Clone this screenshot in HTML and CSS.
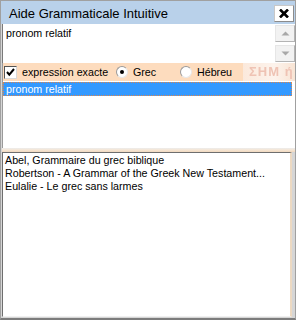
FILE: index.html
```html
<!DOCTYPE html>
<html lang="fr">
<head>
<meta charset="utf-8">
<title>Aide Grammaticale Intuitive</title>
<link rel="stylesheet" href="styles.css">
</head>
<body>
<div class="window">
  <div class="titlebar">
    <span class="title">Aide Grammaticale Intuitive</span>
    <div class="close">
      <svg width="10" height="9" viewBox="0 0 10 9"><path d="M1 0.5 L9 8.5 M9 0.5 L1 8.5" stroke="#000" stroke-width="2.6" fill="none"/></svg>
    </div>
  </div>
  <div class="main">
    <div class="search">
      <div class="search-text">pronom relatif</div>
      <div class="vscroll">
        <div class="sbtn"><svg width="9" height="5" viewBox="0 0 9 5"><path d="M0.5 4.5 L4.5 0.5 L8.5 4.5 Z" fill="#a8a8a8"/></svg></div>
        <div class="sbtn"><svg width="9" height="5" viewBox="0 0 9 5"><path d="M0.5 0.5 L4.5 4.5 L8.5 0.5 Z" fill="#a8a8a8"/></svg></div>
      </div>
    </div>
    <div class="options">
      <div class="opts">
        <label class="opt"><span class="check"><svg width="11" height="11" viewBox="0 0 11 11"><path d="M2 5 L4.3 7.6 L9 2" stroke="#000" stroke-width="2" fill="none"/></svg></span>expression exacte</label>
        <label class="opt"><span class="radio on"></span>Grec</label>
        <label class="opt"><span class="radio"></span>Hébreu</label>
      </div>
      <div class="deco">ΣΗΜ ή</div>
    </div>
    <div class="list1">
      <div class="item sel">pronom relatif</div>
    </div>
    <div class="splitter"></div>
    <div class="list2">
      <div class="row">Abel, Grammaire du grec biblique</div>
      <div class="row">Robertson - A Grammar of the Greek New Testament...</div>
      <div class="row">Eulalie - Le grec sans larmes</div>
    </div>
  </div>
</div>
</body>
</html>
```

FILE: styles.css
```css
html, body {
  margin: 0;
  padding: 0;
  background: #ffffff;
}
body {
  font-family: "Liberation Sans", Arial, sans-serif;
  font-size: 10.7px;
  color: #000;
}
.window {
  width: 296px;
  height: 320px;
  box-sizing: border-box;
  border: 1px solid #a0a0a0;
  border-bottom: 2px solid #7c7c7c;
  display: flex;
  flex-direction: column;
  background: #d6d6d6;
}
.titlebar {
  height: 23px;
  flex: none;
  background: #b9d1ea;
  display: flex;
  align-items: center;
  justify-content: space-between;
  padding: 0 1px 0 8px;
}
.title {
  font-size: 13px;
  color: #000;
  padding-top: 2px;
}
.close {
  width: 18px;
  height: 15px;
  margin-top: 1px;
  background: #fff;
  border: 1px solid #8c8c8c;
  border-top-color: #c8c8c8;
  border-left-color: #c8c8c8;
  display: flex;
  align-items: center;
  justify-content: center;
}
.main {
  flex: 1;
  display: flex;
  flex-direction: column;
  padding: 0 0 1px 1px;
  min-height: 0;
}
.search {
  height: 39px;
  flex: none;
  display: flex;
  background: #fff;
  border-left: 1px solid #7a7a7a;
}
.search-text {
  flex: 1;
  padding: 3px 0 0 3px;
  line-height: 13px;
}
.vscroll {
  width: 20px;
  display: flex;
  flex-direction: column;
  justify-content: space-between;
  padding: 1px 0;
}
.sbtn {
  height: 15px;
  background: #f2f2f2;
  border: 1px solid #b4b4b4;
  border-top-color: #e6e6e6;
  border-left-color: #e6e6e6;
  display: flex;
  align-items: center;
  justify-content: center;
}
.options {
  height: 18px;
  flex: none;
  display: flex;
  border-left: 1px solid #9a9a9a;
}
.opts {
  width: 240px;
  background: #fddcbe;
  display: grid;
  grid-template-columns: 112px 64px auto;
  align-items: center;
  padding-left: 1px;
  box-sizing: border-box;
}
.opt {
  display: flex;
  align-items: center;
  gap: 5px;
  line-height: 18px;
}
.check {
  width: 11px;
  height: 11px;
  background: #fff;
  border: 1px solid #555;
  border-right-color: #d8d8d8;
  border-bottom-color: #d8d8d8;
  display: flex;
  align-items: center;
  justify-content: center;
}
.radio {
  width: 10px;
  height: 10px;
  border-radius: 50%;
  background: #fff;
  border: 1px solid #9a9a9a;
  border-right-color: #e8e8e8;
  border-bottom-color: #e8e8e8;
  display: flex;
  align-items: center;
  justify-content: center;
}
.radio.on::after {
  content: "";
  width: 4px;
  height: 4px;
  border-radius: 50%;
  background: #000;
}
.deco {
  flex: 1;
  background: linear-gradient(90deg, #fbe9dc, #fdf3ec 60%, #f8e4d4);
  color: #efc3b4;
  font-weight: bold;
  font-size: 13px;
  line-height: 18px;
  padding-left: 6px;
  letter-spacing: 1px;
  filter: blur(0.7px);
  overflow: hidden;
  white-space: nowrap;
}
.list1 {
  height: 66px;
  flex: none;
  background: #fff;
  border-left: 1px solid #9a9a9a;
  padding: 1px 3px 0 0;
}
.item {
  height: 12px;
  line-height: 12px;
  padding-left: 2px;
}
.item.sel {
  background: #3399ff;
  color: #fff;
  border: 1px dotted #e0864a;
}
.splitter {
  height: 4px;
  flex: none;
  background: linear-gradient(180deg, #ececec, #f6e6d4 50%, #f0d8bf);
}
.list2 {
  flex: 1;
  background: #fff;
  border: 1px solid #6e6e6e;
  border-right: 2px solid #ecd9c2;
  border-bottom: 1px solid #f0f0f0;
  margin-right: 3px;
  padding: 1px 0 0 2px;
}
.row {
  line-height: 13px;
  height: 13px;
  white-space: nowrap;
}
```
